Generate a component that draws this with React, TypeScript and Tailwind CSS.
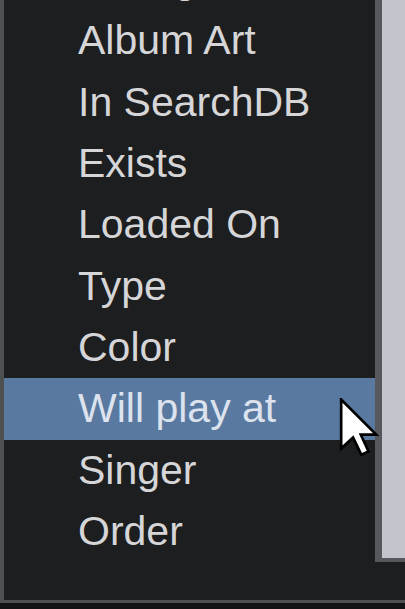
import React from "react";

const items = [
  "Rating",
  "Album Art",
  "In SearchDB",
  "Exists",
  "Loaded On",
  "Type",
  "Color",
  "Will play at",
  "Singer",
  "Order",
];

export default function App() {
  return (
    <div
      className="relative w-[405px] h-[609px] overflow-hidden bg-[#121315]"
      style={{ fontFamily: '"Liberation Sans", Arial, sans-serif' }}
    >
      <div className="flex h-[603px] border-l-4 border-b-[3px] border-[#4f5052] bg-[#1d1e20]">
        <div className="w-[371px] shrink-0 overflow-hidden">
          <div className="mt-[-51px] flex flex-col">
            {items.map((t) => {
              const active = t === "Will play at";
              return (
                <div
                  key={t}
                  className={
                    "h-[61.33px] shrink-0 pl-[74px] text-[41px] leading-[61.33px] " +
                    (active ? "bg-[#5a79a0] text-[#dde3ee]" : "text-[#d6d6d8]")
                  }
                >
                  {t}
                </div>
              );
            })}
          </div>
        </div>
        <div className="flex-1">
          <div className="h-[562px] border-l-[7px] border-b-4 border-[#57585b] bg-[#c3c4cc]" />
        </div>
      </div>

      <svg
        className="absolute left-[339px] top-[398px]"
        width="40"
        height="58"
        viewBox="-0.5 -0.5 13 19.5"
      >
        <path
          d="M0 0 L0 16.5 L4 12.8 L6.8 18.6 L9.2 17.5 L6.6 11.8 L11.8 11.8 Z"
          fill="#ffffff"
          stroke="#000000"
          strokeWidth="0.9"
          strokeLinejoin="miter"
        />
      </svg>
    </div>
  );
}
